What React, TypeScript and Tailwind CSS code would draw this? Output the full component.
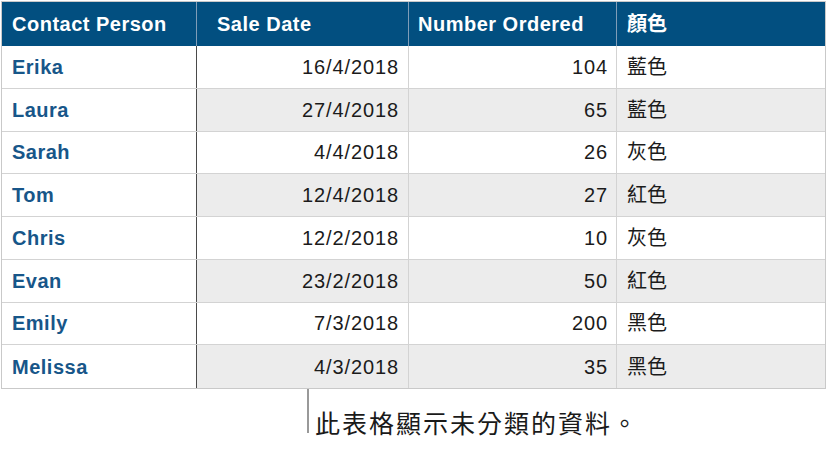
import React from 'react';

const rows = [
  { name: 'Erika', date: '16/4/2018', qty: 104, color: '藍色' },
  { name: 'Laura', date: '27/4/2018', qty: 65, color: '藍色' },
  { name: 'Sarah', date: '4/4/2018', qty: 26, color: '灰色' },
  { name: 'Tom', date: '12/4/2018', qty: 27, color: '紅色' },
  { name: 'Chris', date: '12/2/2018', qty: 10, color: '灰色' },
  { name: 'Evan', date: '23/2/2018', qty: 50, color: '紅色' },
  { name: 'Emily', date: '7/3/2018', qty: 200, color: '黑色' },
  { name: 'Melissa', date: '4/3/2018', qty: 35, color: '黑色' },
];

const latin = "font-['Liberation_Sans','Noto_Sans_CJK_TC',sans-serif]";

const App = () => {
  return (
    <div className={`w-[827px] h-[450px] bg-white pl-[1px] pt-[1px] ${latin}`}>
      {/* Table */}
      <div className="w-[825px] border border-[#c9c9c9]">
        {/* Header */}
        <div className="grid grid-cols-[195px_212px_208px_1fr] h-[44px] bg-[#024f80] text-white font-bold text-[20px] tracking-[0.5px]">
          <div className="flex items-center pl-[10px] border-r border-[#7f9db8]">Contact Person</div>
          <div className="flex items-center pl-[20px] border-r border-[#7f9db8]">Sale Date</div>
          <div className="flex items-center pl-[9px] border-r border-[#7f9db8]">Number Ordered</div>
          <div className="flex items-center pl-[10px] tracking-normal">顏色</div>
        </div>

        {/* Body */}
        {rows.map((r, i) => {
          const shade = i % 2 === 1 ? 'bg-[#ececec]' : 'bg-white';
          return (
            <div
              key={r.name}
              className={`grid grid-cols-[195px_212px_208px_1fr] h-[42.75px] text-[20px] text-[#1b1b1b] ${
                i < rows.length - 1 ? 'border-b border-[#d3d3d3]' : ''
              }`}
            >
              <div className="flex items-center pl-[10px] bg-white border-r border-[#4a4a4a] font-bold text-[#175689] tracking-[0.5px]">
                {r.name}
              </div>
              <div className={`flex items-center justify-end pr-[9px] border-r border-[#d3d3d3] tracking-[0.9px] ${shade}`}>
                {r.date}
              </div>
              <div className={`flex items-center justify-end pr-[8px] border-r border-[#d3d3d3] tracking-[0.9px] ${shade}`}>
                {r.qty}
              </div>
              <div className={`flex items-center pl-[10px] ${shade}`}>{r.color}</div>
            </div>
          );
        })}
      </div>

      {/* Callout */}
      <div className="flex items-end ml-[306px]">
        <div className="w-[2px] h-[44px] bg-[#999999]" />
        <span className="ml-[6px] -mb-[4px] text-[25px] tracking-[2px] text-[#1a1a1a] leading-none">
          此表格顯示未分類的資料。
        </span>
      </div>
    </div>
  );
};

export default App;
